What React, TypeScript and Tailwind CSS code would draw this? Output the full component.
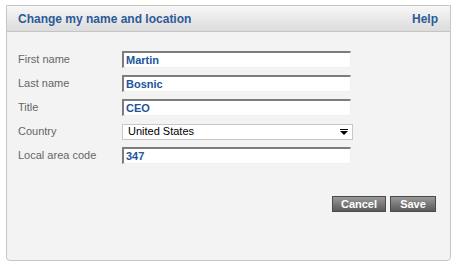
export default function App() {
  const fields = [
    { label: 'First name', value: 'Martin' },
    { label: 'Last name', value: 'Bosnic' },
    { label: 'Title', value: 'CEO' },
  ];
  return (
    <div className="w-[456px] h-[267px] bg-white pt-[5px] pl-[6px] font-['Liberation_Sans',Arial,sans-serif]">
      <div className="w-[445px] h-[256px] border border-[#c6c6c6] rounded-b-[4px] bg-[#f3f3f3] flex flex-col">
        <div className="h-[26px] shrink-0 flex items-center justify-between pl-[11px] pr-[12px] bg-gradient-to-b from-[#f7f7f7] to-[#dcdcdc] border-b border-[#c4c4c4]">
          <span className="text-[12px] font-bold text-[#2c5a98]">Change my name and location</span>
          <span className="text-[12px] font-bold text-[#2c5a98]">Help</span>
        </div>
        <div className="flex flex-col gap-[7px] pt-[19px] pl-[11px]">
          {fields.map((f) => (
            <Row key={f.label} label={f.label}>
              <TextBox value={f.value} />
            </Row>
          ))}
          <Row label="Country">
            <div className="w-[231px] h-[16px] border border-[#c8c8c8] bg-white flex items-center justify-between pl-[5px] pr-[4px]">
              <span className="text-[11px] text-black">United States</span>
              <svg width="8" height="6" viewBox="0 0 8 6">
                <rect x="0" y="0" width="8" height="1" fill="#000" />
                <polygon points="0,2 8,2 4,6" fill="#000" />
              </svg>
            </div>
          </Row>
          <Row label="Local area code">
            <TextBox value="347" />
          </Row>
        </div>
        <div className="flex justify-end gap-[4px] pr-[14px] mt-[32px]">
          <Button label="Cancel" w="w-[54px]" />
          <Button label="Save" w="w-[46px]" />
        </div>
      </div>
    </div>
  );
}

function Row({ label, children }: { label: string; children: React.ReactNode }) {
  return (
    <div className="flex items-center h-[17px]">
      <span className="w-[104px] text-[11px] text-[#666666]">{label}</span>
      {children}
    </div>
  );
}

function TextBox({ value }: { value: string }) {
  return (
    <div className="w-[229px] h-[17px] bg-white border-t-2 border-l-2 border-t-[#7c7c7c] border-l-[#7c7c7c] border-r border-b border-r-[#f0f0f0] border-b-[#f0f0f0] flex items-center pl-[2px]">
      <span className="text-[11px] font-bold text-[#24539a]">{value}</span>
    </div>
  );
}

function Button({ label, w }: { label: string; w: string }) {
  return (
    <div className={`${w} h-[16px] flex items-center justify-center bg-gradient-to-b from-[#9a9a9a] to-[#5a5a5a] border border-[#4a4a4a] text-white text-[11px] font-bold`}>
      {label}
    </div>
  );
}
